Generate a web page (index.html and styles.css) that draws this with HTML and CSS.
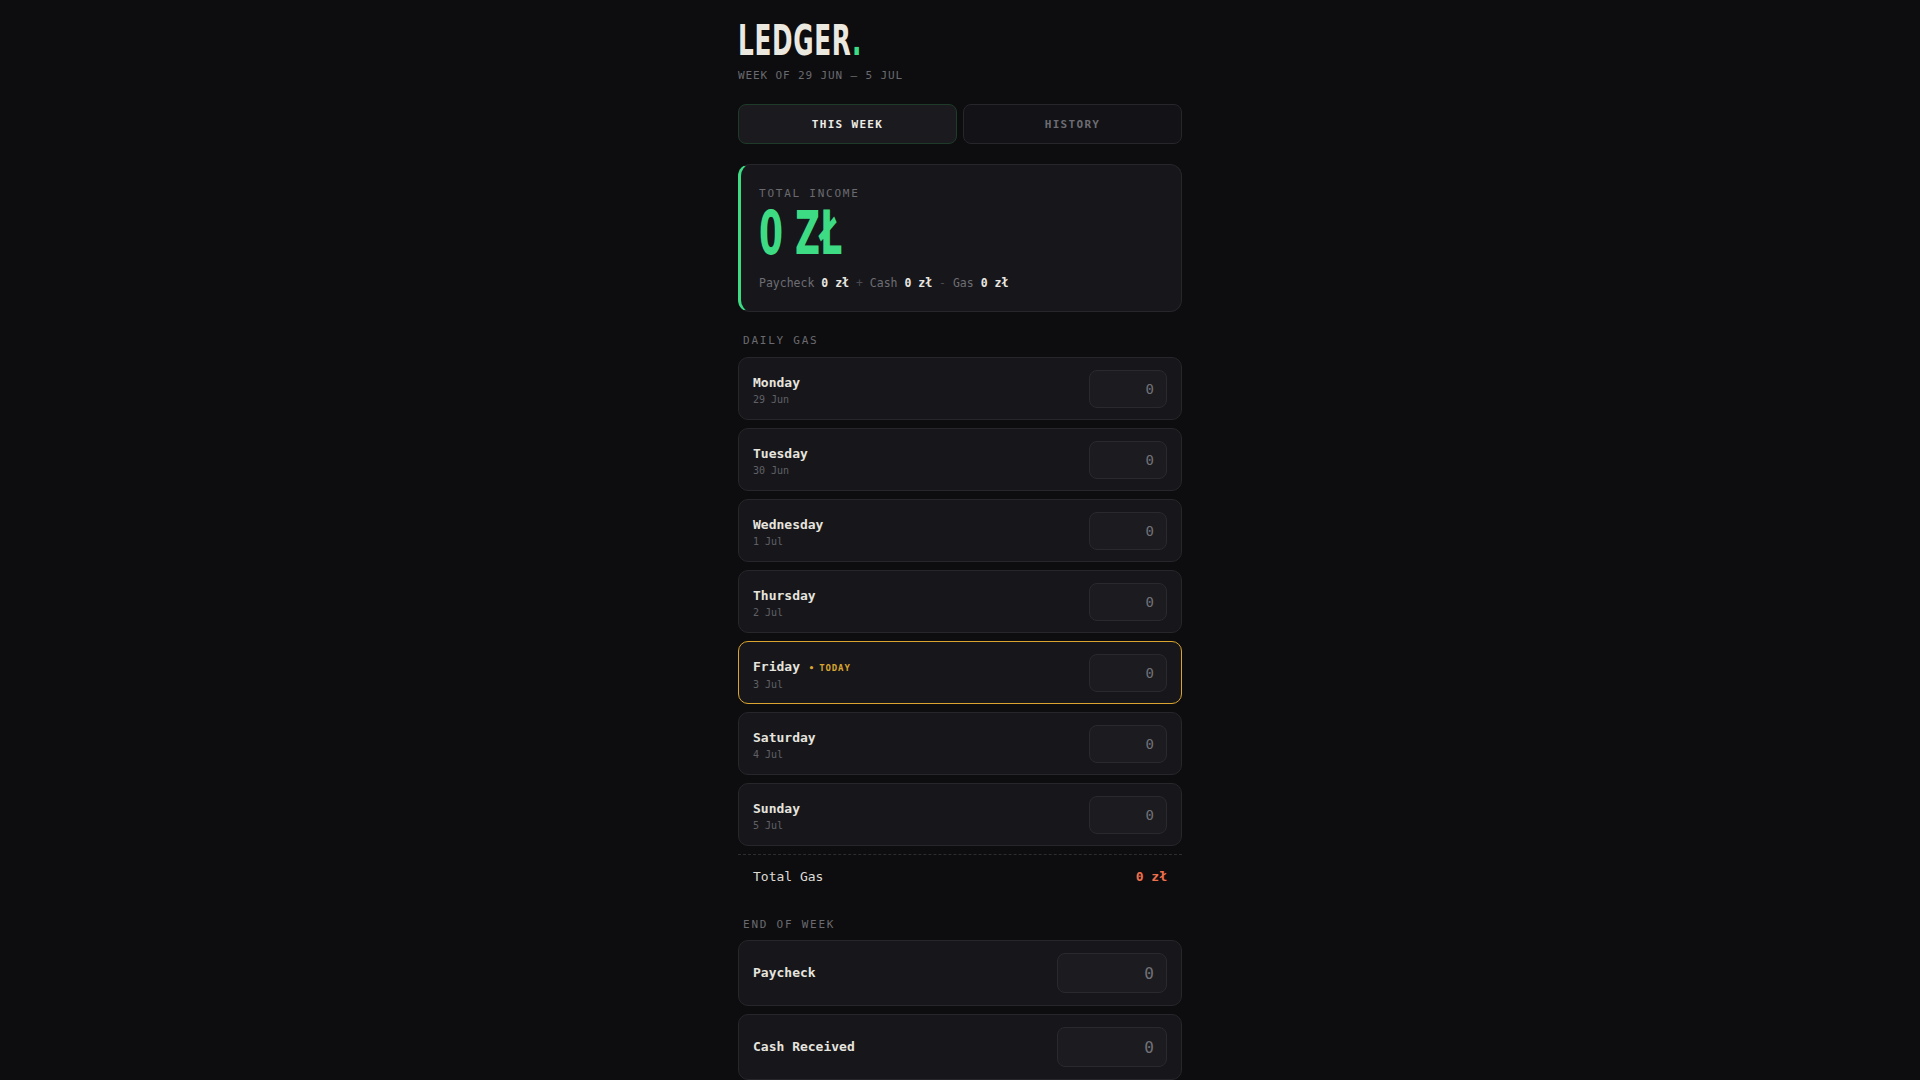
FILE: index.html
```html
<!DOCTYPE html>
<html lang="en">
<head>
    <meta charset="UTF-8">
    <meta name="viewport" content="width=device-width, initial-scale=1.0">
    <title>Ledger</title>
    <link rel="stylesheet" href="styles.css">
</head>
<body>
    <div class="app">
        <!-- Cabecera -->
        <header class="header">
            <h1 class="logo"><span class="logo-text">LEDGER<span class="dot">.</span></span></h1>
            <div class="week">WEEK OF 29 JUN – 5 JUL</div>
        </header>

        <div class="tabs">
            <button class="tab active">THIS WEEK</button>
            <button class="tab">HISTORY</button>
        </div>

        <!-- Resumen -->
        <div class="income-card">
            <div class="label">TOTAL INCOME</div>
            <div class="income-value"><span class="big">0 ZŁ</span></div>
            <div class="breakdown">
                Paycheck <b>0 zł</b> <span class="op">+</span> Cash <b>0 zł</b> <span class="op">-</span> Gas <b>0 zł</b>
            </div>
        </div>

        <div class="section-label">DAILY GAS</div>
        <div class="days">
            <div class="day">
                <div class="day-info">
                    <div class="day-name">Monday</div>
                    <div class="day-date">29 Jun</div>
                </div>
                <input class="gas-input" type="text" placeholder="0">
            </div>
            <div class="day">
                <div class="day-info">
                    <div class="day-name">Tuesday</div>
                    <div class="day-date">30 Jun</div>
                </div>
                <input class="gas-input" type="text" placeholder="0">
            </div>
            <div class="day">
                <div class="day-info">
                    <div class="day-name">Wednesday</div>
                    <div class="day-date">1 Jul</div>
                </div>
                <input class="gas-input" type="text" placeholder="0">
            </div>
            <div class="day">
                <div class="day-info">
                    <div class="day-name">Thursday</div>
                    <div class="day-date">2 Jul</div>
                </div>
                <input class="gas-input" type="text" placeholder="0">
            </div>
            <div class="day today">
                <div class="day-info">
                    <div class="day-name">Friday <span class="today-tag"><span class="bullet">•</span>TODAY</span></div>
                    <div class="day-date">3 Jul</div>
                </div>
                <input class="gas-input" type="text" placeholder="0">
            </div>
            <div class="day">
                <div class="day-info">
                    <div class="day-name">Saturday</div>
                    <div class="day-date">4 Jul</div>
                </div>
                <input class="gas-input" type="text" placeholder="0">
            </div>
            <div class="day">
                <div class="day-info">
                    <div class="day-name">Sunday</div>
                    <div class="day-date">5 Jul</div>
                </div>
                <input class="gas-input" type="text" placeholder="0">
            </div>
        </div>

        <div class="total-gas">
            <span>Total Gas</span>
            <span class="total-gas-value">0 zł</span>
        </div>

        <div class="section-label end">END OF WEEK</div>
        <div class="entries">
            <div class="entry">
                <div class="entry-name">Paycheck</div>
                <input class="entry-input" type="text" placeholder="0">
            </div>
            <div class="entry">
                <div class="entry-name">Cash Received</div>
                <input class="entry-input" type="text" placeholder="0">
            </div>
        </div>
    </div>
</body>
</html>
```
FILE: styles.css
```css
body {
    margin: 0;
    background-color: #0d0d0f;
    color: #e8e6e1;
    font-family: "DejaVu Sans Mono", monospace;
}
.app {
    width: 444px;
    margin: 0 auto;
    padding-top: 19px;
}
.logo {
    margin: 0;
    font-family: "Liberation Sans Narrow", "DejaVu Sans Condensed", sans-serif;
    font-weight: 700;
    font-size: 43px;
    line-height: 43px;
    letter-spacing: 1px;
    color: #ebe8e0;
}
.logo-text {
    display: inline-block;
    transform: scaleX(0.64);
    transform-origin: left center;
}
.dot {
    color: #3ddc84;
}
.week {
    margin-top: 7px;
    font-size: 11px;
    line-height: 14px;
    letter-spacing: 0.08em;
    color: #6a6a70;
}
.tabs {
    display: flex;
    gap: 6px;
    margin-top: 21px;
}
.tab {
    flex: 1;
    height: 40px;
    border-radius: 8px;
    border: 1px solid #26262b;
    background-color: #131317;
    color: #6c6c72;
    font-family: "DejaVu Sans Mono", monospace;
    font-size: 11px;
    font-weight: bold;
    letter-spacing: 0.12em;
    cursor: pointer;
}
.tab.active {
    background-color: #1b1b1f;
    border-color: #1e3a28;
    color: #eeece7;
}
.income-card {
    margin-top: 20px;
    background-color: #17171b;
    border: 1px solid #26262b;
    border-left: 3px solid #3ddc84;
    border-radius: 12px;
    padding: 22px 18px 20px;
}
.label, .section-label {
    font-size: 11px;
    line-height: 14px;
    letter-spacing: 0.16em;
    color: #6a6a70;
}
.income-value {
    margin-top: 2px;
    font-family: "Liberation Sans Narrow", "DejaVu Sans Condensed", sans-serif;
    font-weight: 700;
    font-size: 60px;
    line-height: 60px;
    color: #3ddc84;
}
.big {
    display: inline-block;
    transform: scaleX(0.64);
    transform-origin: left center;
}
.breakdown {
    margin-top: 12px;
    font-size: 11.5px;
    line-height: 16px;
    color: #6e6e74;
}
.breakdown b {
    color: #e8e6e1;
}
.breakdown .op {
    color: #4a4a50;
}
.section-label {
    margin: 22px 0 9px 5px;
}
.section-label.end {
    margin-top: 23px;
    margin-bottom: 8px;
}
.days, .entries {
    display: flex;
    flex-direction: column;
    gap: 8px;
}
.day, .entry {
    display: flex;
    align-items: center;
    justify-content: space-between;
    box-sizing: border-box;
    background-color: #17171b;
    border: 1px solid #26262b;
    border-radius: 10px;
    padding: 0 14px;
}
.day {
    height: 63px;
}
.day-info {
    padding-top: 4px;
}
.day.today {
    border-color: #d9a530;
}
.day-name, .entry-name {
    font-size: 13px;
    line-height: 16px;
    font-weight: bold;
    color: #e6e4df;
}
.day-date {
    margin-top: 2px;
    font-size: 10px;
    line-height: 13px;
    color: #606066;
}
.today-tag {
    margin-left: 1px;
    font-size: 9px;
    letter-spacing: 0.1em;
    color: #d9a530;
}
.bullet {
    margin-right: 4px;
}
.gas-input, .entry-input {
    box-sizing: border-box;
    background-color: #1c1c20;
    border: 1px solid #29292e;
    border-radius: 8px;
    color: #e6e4df;
    font-family: "DejaVu Sans Mono", monospace;
    text-align: right;
    padding: 0 12px;
    outline: none;
}
.gas-input {
    width: 78px;
    height: 38px;
    font-size: 14px;
}
.entry {
    height: 66px;
}
.entry-input {
    width: 110px;
    height: 40px;
    font-size: 16px;
}
.gas-input::placeholder, .entry-input::placeholder {
    color: #717177;
}
.total-gas {
    display: flex;
    justify-content: space-between;
    margin-top: 8px;
    border-top: 1px dashed #2c2c31;
    padding: 14px 15px 10px;
    font-size: 13px;
    line-height: 16px;
    color: #dddbd6;
}
.total-gas-value {
    font-weight: bold;
    color: #ef6f4c;
}
```
